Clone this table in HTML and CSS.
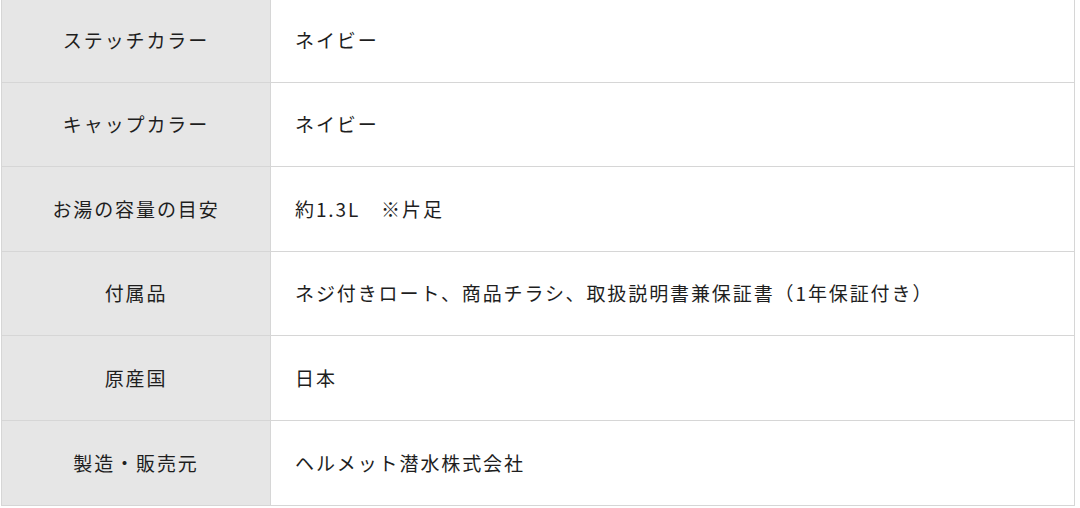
FILE: index.html
```html
<!DOCTYPE html>
<html lang="ja">

<head>
  <meta charset="UTF-8">
  <meta name="viewport" content="width=device-width, initial-scale=1.0">
  <title>商品仕様</title>
  <link rel="stylesheet" href="styles.css">
</head>

<body>
  <table class="spec">
    <tr>
      <th>ステッチカラー</th>
      <td>ネイビー</td>
    </tr>
    <tr>
      <th>キャップカラー</th>
      <td>ネイビー</td>
    </tr>
    <tr>
      <th>お湯の容量の目安</th>
      <td>約1.3L　※片足</td>
    </tr>
    <tr>
      <th>付属品</th>
      <td>ネジ付きロート、商品チラシ、取扱説明書兼保証書（1年保証付き）</td>
    </tr>
    <tr>
      <th>原産国</th>
      <td>日本</td>
    </tr>
    <tr>
      <th>製造・販売元</th>
      <td>ヘルメット潜水株式会社</td>
    </tr>
  </table>
</body>

</html>
```

FILE: styles.css
```css
body {
  margin: 0;
  padding: 0 5px 0 1px;
  background: #fff;
  font-family: "Noto Sans CJK JP", "Noto Sans", sans-serif;
  color: #1e1e1e;
}

.spec {
  width: 100%;
  margin-top: -3px;
  border-collapse: collapse;
  border: 1px solid #d6d6d6;
}

.spec th,
.spec td {
  height: 83.6px;
  padding: 0;
  border: 1px solid #d6d6d6;
  font-size: 19px;
  font-weight: normal;
  letter-spacing: 0.1em;
  line-height: 1.5;
}

.spec th {
  width: 268px;
  background: #e6e6e6;
  text-align: center;
}

.spec td {
  padding-left: 24px;
  text-align: left;
}
```
